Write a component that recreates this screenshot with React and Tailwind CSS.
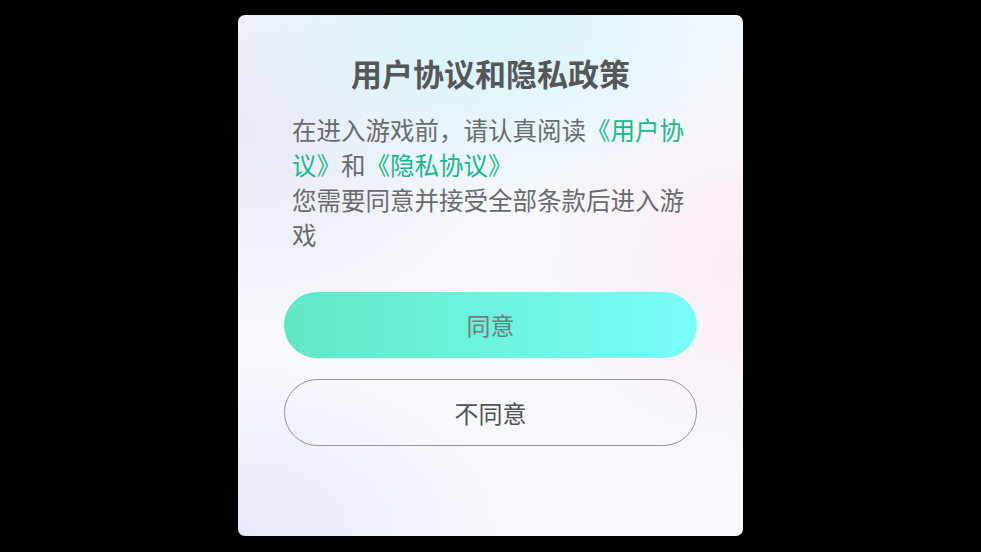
export default function App() {
  return (
    <div className="w-[981px] h-[552px] bg-black flex justify-center pt-[15px] font-['Noto_Sans_CJK_SC','Noto_Sans',sans-serif]">
      <div className="w-[505px] h-[521px] rounded-[7px] overflow-hidden flex flex-col px-[46px] pt-[38px] bg-[radial-gradient(ellipse_55%_35%_at_50%_2%,#d6f4fb_0%,rgba(214,244,251,0)_100%),radial-gradient(ellipse_55%_40%_at_0%_22%,#e8e9f8_0%,rgba(232,233,248,0)_100%),radial-gradient(ellipse_45%_40%_at_100%_48%,#fcecf5_0%,rgba(252,236,245,0)_100%),radial-gradient(ellipse_55%_35%_at_0%_100%,#e6e9fa_0%,rgba(230,233,250,0)_100%),linear-gradient(#f6f9fd,#f8f9fd)]">
        <h1 className="text-center text-[31px] leading-[40px] font-semibold text-[#555759]">用户协议和隐私政策</h1>
        <div className="mt-[19px] px-[8px] text-[24.5px] leading-[35px] text-[#6a6b6d]">
          <p>
            在进入游戏前，请认真阅读<span className="text-[#16b98b]">《用户协议》</span>和<span className="text-[#16b98b]">《隐私协议》</span>
          </p>
          <p>您需要同意并接受全部条款后进入游戏</p>
        </div>
        <button className="mt-[40px] h-[66px] rounded-full bg-[linear-gradient(to_right,#5ee8c5,#79fff9)] text-[24px] text-[#77797b]">
          同意
        </button>
        <button className="mt-[21px] h-[67px] rounded-full border border-[#949494] text-[24px] text-[#505254]">
          不同意
        </button>
      </div>
    </div>
  );
}
